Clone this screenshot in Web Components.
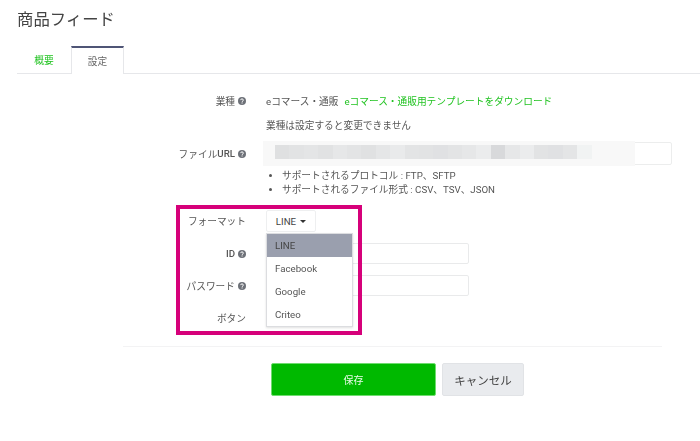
<!DOCTYPE html>
<html lang="ja">
<head>
<meta charset="utf-8">
<title>商品フィード</title>
<style>
  html, body { margin: 0; background: #fff; }
  body { font-family: Roboto, "Noto Sans CJK JP", sans-serif; font-size: 9.7px; color: #555; }
</style>
</head>
<body>
<feed-page>
  <feed-tabs></feed-tabs>
  <form-row label="業種" help top="17" height="20">
    <span>eコマース・通販</span><a-link>eコマース・通販用テンプレートをダウンロード</a-link>
  </form-row>
  <form-row height="28"><span>業種は設定すると変更できません</span></form-row>
  <form-row label="ファイル" strong="URL" help top="3" height="23"><url-input></url-input></form-row>
  <hint-list></hint-list>
  <form-row label="フォーマット" top="13" height="22"><format-select></format-select></form-row>
  <form-row strong="ID" help top="11" height="21"><text-box></text-box></form-row>
  <form-row label="パスワード" help top="11" height="21"><text-box></text-box></form-row>
  <form-row label="ボタン" top="11" height="22"></form-row>
  <form-actions></form-actions>
</feed-page>

<script>
class FeedPage extends HTMLElement {
  constructor () {
    super()
    this.attachShadow({ mode: 'open' }).innerHTML = `
      <style>
        :host { display: block; position: relative; width: 700px; height: 441px; overflow: hidden; filter: blur(.3px); }
        h1 { margin: 0; padding: 8px 0 0 17px; height: 46px; box-sizing: border-box;
             font-size: 16.4px; font-weight: 400; line-height: 24px; color: #444; }
        .mark { position: absolute; left: 176px; top: 205px; width: 186px; height: 130px;
                box-sizing: border-box; border: 4px solid #d6007a; pointer-events: none; }
      </style>
      <h1>商品フィード</h1>
      <slot></slot>
      <div class="mark"></div>`
  }
}

class FeedTabs extends HTMLElement {
  constructor () {
    super()
    this.attachShadow({ mode: 'open' }).innerHTML = `
      <style>
        :host { display: flex; height: 28px; margin-left: 17px; box-sizing: border-box;
                border-bottom: 1px solid #e6e7ea; }
        div { display: flex; align-items: center; justify-content: center; height: 28px; box-sizing: border-box; }
        .off { width: 54px; color: #22c322; }
        .on { width: 53px; background: #fff; color: #666; border: 1px solid #e6e7ea;
              border-top: 2px solid #4f5576; border-bottom: 0; }
      </style>
      <div class="off">概要</div>
      <div class="on">設定</div>`
  }
}

class HelpIcon extends HTMLElement {
  constructor () {
    super()
    this.attachShadow({ mode: 'open' }).innerHTML = `
      <style>
        :host { display: inline-flex; width: 8px; height: 8px; margin-left: 3px; }
        svg { display: block; }
      </style>
      <svg width="8" height="8" viewBox="0 0 16 16">
        <circle cx="8" cy="8" r="8" fill="#6d7178"/>
        <path d="M5.2 6.2C5.3 4.6 6.5 3.8 8 3.8c1.6 0 2.8.9 2.8 2.3 0 2-2.6 2-2.6 3.7" fill="none" stroke="#fff" stroke-width="1.9"/>
        <rect x="7.1" y="10.9" width="2.1" height="2.1" fill="#fff"/>
      </svg>`
  }
}

class FormRow extends HTMLElement {
  constructor () {
    super()
    this.attachShadow({ mode: 'open' }).innerHTML = `
      <style>
        :host { display: grid; grid-template-columns: 246px 1fr; column-gap: 20px; align-items: center; }
        .label { display: flex; justify-content: flex-end; align-items: center; color: #555; white-space: nowrap; }
        .value { display: flex; align-items: center; min-width: 0; white-space: nowrap; }
        b { font-weight: 500; }
      </style>
      <div class="label"></div>
      <div class="value"><slot></slot></div>`
  }

  connectedCallback () {
    const label = this.shadowRoot.querySelector('.label')
    if (this.hasAttribute('label')) {
      const t = document.createElement('span')
      t.textContent = this.getAttribute('label')
      label.append(t)
    }
    if (this.hasAttribute('strong')) {
      const b = document.createElement('b')
      b.textContent = this.getAttribute('strong')
      label.append(b)
    }
    if (this.hasAttribute('help')) label.append(document.createElement('help-icon'))
    this.style.height = this.getAttribute('height') + 'px'
    this.style.marginTop = (this.getAttribute('top') || 0) + 'px'
  }
}

class ALink extends HTMLElement {
  constructor () {
    super()
    this.attachShadow({ mode: 'open' }).innerHTML = `
      <style>:host { display: inline-block; margin-left: 6px; color: #22c322; }</style><slot></slot>`
  }
}

class UrlInput extends HTMLElement {
  constructor () {
    super()
    // mosaic over the masked URL
    const shades = ['#dfe0e1', '#e2e3e4', '#e4e5e6', '#e1e2e3', '#e6e7e8', '#e3e4e5', '#e0e1e2', '#e5e6e7',
      '#e9eaeb', '#e3e4e5', '#e2e3e4', '#e0e1e3', '#e3e4e5', '#e6e7e8', '#ebeced', '#d8d9db',
      '#e6e7e8', '#ebeced', '#e2e3e4', '#e0e1e3', '#e4e5e6', '#f1f3f3']
    this.attachShadow({ mode: 'open' }).innerHTML = `
      <style>
        :host { display: block; width: 406px; height: 23px; box-sizing: border-box; position: relative;
                border: 1px solid #eceded; border-radius: 2px; background: #fff; }
        .halo { display: flex; height: 25px; width: 372px; margin: -2px 0 0 -4px; padding: 4px 0 0 12px;
                box-sizing: border-box; background: #f8f8f8; }
        .blocks { display: flex; height: 14px; }
        i { display: block; width: 14.4px; height: 14px; }
      </style>
      <div class="halo"><div class="blocks">${shades.map(c => `<i style="background:${c}"></i>`).join('')}</div></div>`
  }
}

class HintList extends HTMLElement {
  constructor () {
    super()
    this.attachShadow({ mode: 'open' }).innerHTML = `
      <style>
        :host { display: block; margin: 4px 0 0 266px; }
        ul { margin: 0; padding: 0 0 0 16px; line-height: 14px; color: #555; }
      </style>
      <ul>
        <li>サポートされるプロトコル : FTP、SFTP</li>
        <li>サポートされるファイル形式 : CSV、TSV、JSON</li>
      </ul>`
  }
}

class FormatSelect extends HTMLElement {
  constructor () {
    super()
    this.attachShadow({ mode: 'open' }).innerHTML = `
      <style>
        :host { display: block; position: relative; }
        button { display: flex; align-items: center; justify-content: center; gap: 4px; width: 50px; height: 22px;
                 padding: 0; background: #fff; border: 1px solid #eeeff0; border-radius: 2px;
                 font: inherit; color: #444; }
        .caret { width: 0; height: 0; border: 3px solid transparent; border-top: 3px solid #333; border-bottom: 0; }
        ul { position: absolute; left: 0; top: 23px; width: 87px; height: 94px; margin: 0; padding: 0; z-index: 2;
             box-sizing: border-box; list-style: none; background: #fff; border: 1px solid #dcdde0;
             box-shadow: 0 1px 2px rgba(0,0,0,.12); }
        li { height: 23px; line-height: 23px; padding-left: 8px; color: #555; }
        li.sel { background: #9a9fae; color: #444; }
      </style>
      <button>LINE <span class="caret"></span></button>
      <ul>
        <li class="sel">LINE</li>
        <li>Facebook</li>
        <li>Google</li>
        <li>Criteo</li>
      </ul>`
  }
}

class TextBox extends HTMLElement {
  constructor () {
    super()
    this.attachShadow({ mode: 'open' }).innerHTML = `
      <style>
        :host { display: block; width: 203px; height: 21px; box-sizing: border-box;
                border: 1px solid #e9eaeb; border-radius: 2px; background: #fff; }
      </style>`
  }
}

class FormActions extends HTMLElement {
  constructor () {
    super()
    this.attachShadow({ mode: 'open' }).innerHTML = `
      <style>
        :host { display: flex; justify-content: center; gap: 6px; box-sizing: border-box;
                width: 539px; margin: 17px 0 0 123px; padding: 16px 0 0 10px; border-top: 1px solid #f3f3f4; }
        button { height: 33px; padding: 0; border-radius: 2px; font-family: inherit; }
        .save { width: 165px; background: #00b900; border: 1px solid #6fdc6f; color: #e9fbe9; font-size: 10px; }
        .cancel { width: 82px; background: #e9ebee; border: 1px solid #e1e3e6; color: #444; font-size: 11.5px; }
      </style>
      <button class="save">保存</button>
      <button class="cancel">キャンセル</button>`
  }
}

customElements.define('feed-page', FeedPage)
customElements.define('feed-tabs', FeedTabs)
customElements.define('help-icon', HelpIcon)
customElements.define('form-row', FormRow)
customElements.define('a-link', ALink)
customElements.define('url-input', UrlInput)
customElements.define('hint-list', HintList)
customElements.define('format-select', FormatSelect)
customElements.define('text-box', TextBox)
customElements.define('form-actions', FormActions)
</script>
</body>
</html>
